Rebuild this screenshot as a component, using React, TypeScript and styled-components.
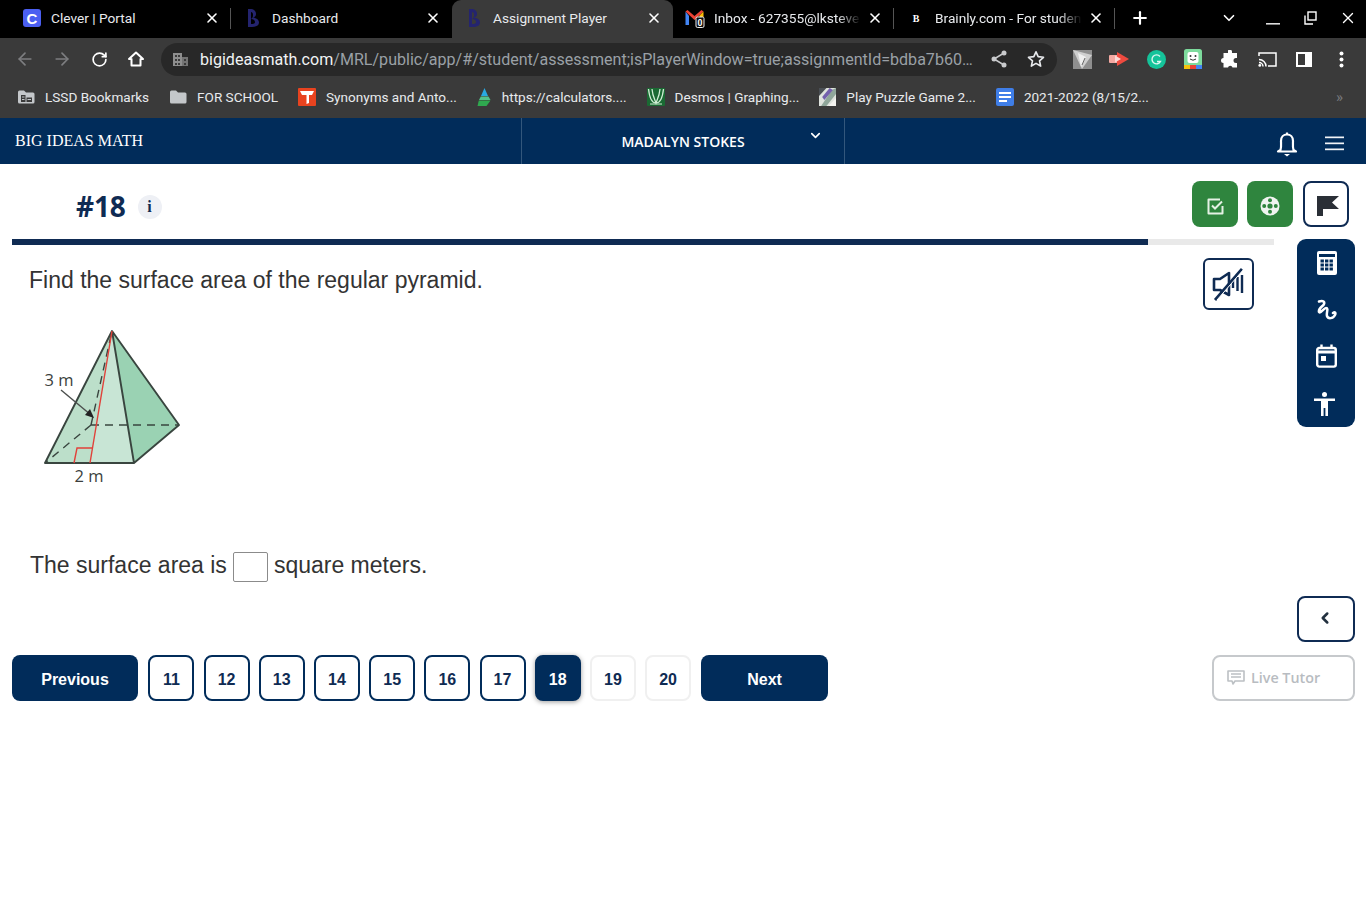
import React from "react";
import styled, { createGlobalStyle } from "styled-components";
import { X, Plus, ChevronDown, ArrowLeft, ArrowRight, RotateCw, ChevronLeft } from "lucide-react";

const NAVY = "#012c5a";
const INK = "#0f2b53";

const Global = createGlobalStyle`
  html, body { margin: 0; padding: 0; background: #fff; }
  #root { min-height: 912px; }
  * { box-sizing: border-box; }
`;

const Page = styled.div`
  width: 1366px;
  height: 912px;
  overflow: hidden;
  display: flex;
  flex-direction: column;
  font-family: "Liberation Sans", Arial, sans-serif;
`;

/* ---------- browser chrome ---------- */
const TabStrip = styled.div`
  height: 38px;
  background: #000;
  display: flex;
  align-items: stretch;
  padding-left: 10px;
  font-family: Roboto, sans-serif;
`;
const Tab = styled.div<{ $active?: boolean; $sep?: boolean }>`
  position: relative;
  width: 221px;
  flex: none;
  display: flex;
  align-items: center;
  padding: 0 9px 2px 0;
  color: #e8eaed;
  font-size: 13.7px;
  background: ${(p) => (p.$active ? "#3a3a3a" : "transparent")};
  border-radius: ${(p) => (p.$active ? "9px 9px 0 0" : "0")};
  &::after {
    content: "";
    display: ${(p) => (p.$sep ? "block" : "none")};
    position: absolute;
    right: 0;
    top: 8px;
    height: 21px;
    width: 1px;
    background: #555;
  }
`;
const TabIcon = styled.span`
  width: 41px;
  flex: none;
  display: flex;
  justify-content: center;
  padding-left: 3px;
`;
const TabTitle = styled.span`
  flex: 1;
  min-width: 0;
  white-space: nowrap;
`;
const FadedTitle = styled.span`
  flex: 1;
  min-width: 0;
  height: 18px;
  line-height: 18px;
  white-space: nowrap;
  overflow: hidden;
  -webkit-mask-image: linear-gradient(to right, #000 84%, transparent 100%);
  mask-image: linear-gradient(to right, #000 84%, transparent 100%);
`;
const CloseGlyph = styled.span`
  width: 20px;
  flex: none;
  display: flex;
  justify-content: center;
  color: #fff;
  margin-left: 4px;
`;
const StripTail = styled.div`
  display: flex;
  align-items: center;
  flex: 1;
  color: #fff;
  padding-bottom: 2px;
`;
const NewTab = styled.span`
  display: flex;
  margin-left: 15px;
`;
const TabSearch = styled.span`
  display: flex;
  margin-left: 70px;
`;
const WinButton = styled.span<{ $ml: number }>`
  display: flex;
  margin-left: ${(p) => p.$ml}px;
`;

const Toolbar = styled.div`
  height: 42px;
  background: #3a3a3a;
  display: flex;
  align-items: center;
  padding-left: 6.5px;
  font-family: Roboto, sans-serif;
`;
const ToolButton = styled.span<{ $dim?: boolean }>`
  width: 37px;
  flex: none;
  display: flex;
  justify-content: center;
  align-items: center;
  color: ${(p) => (p.$dim ? "#7d7e80" : "#fff")};
`;
const Omnibox = styled.div`
  width: 896px;
  height: 33px;
  flex: none;
  margin: 0 6.5px;
  background: #282828;
  border-radius: 17px;
  display: flex;
  align-items: center;
  padding: 0 3px 0 12px;
`;
const SiteGlyph = styled.span`
  display: flex;
  width: 27px;
  flex: none;
`;
const Url = styled.div`
  flex: 1;
  font-size: 16.07px;
  color: #9aa0a6;
  white-space: nowrap;
  overflow: hidden;
`;
const Host = styled.span`
  color: #f1f3f4;
`;

const BookmarkBar = styled.div`
  height: 38px;
  background: #3a3a3a;
  display: flex;
  align-items: center;
  padding: 0 0 4px 17px;
  gap: 20px;
  font-family: Roboto, sans-serif;
  font-size: 13.55px;
  color: #e8eaed;
`;
const Bookmark = styled.span`
  display: flex;
  align-items: center;
  gap: 10px;
  white-space: nowrap;
`;
const Overflow = styled.span`
  margin-left: auto;
  margin-right: 23px;
  color: #77797c;
  font-size: 15px;
`;

/* ---------- app header ---------- */
const AppHeader = styled.header`
  height: 46px;
  background: ${NAVY};
  display: flex;
  align-items: center;
  color: #fff;
`;
const Brand = styled.div`
  width: 521px;
  flex: none;
  padding-left: 15px;
  font-family: "Liberation Serif", serif;
  font-size: 16px;
`;
const UserMenu = styled.div`
  position: relative;
  width: 324px;
  height: 100%;
  flex: none;
  border-left: 1px solid #33577c;
  border-right: 1px solid #33577c;
  display: flex;
  align-items: center;
  justify-content: center;
  font-family: "Open Sans", sans-serif;
  font-weight: 600;
  font-size: 14px;
`;
const UserChevron = styled.span`
  position: absolute;
  right: 21px;
  top: 10px;
  display: flex;
`;
const HeaderActions = styled.div`
  flex: 1;
  display: flex;
  justify-content: flex-end;
  align-items: center;
  gap: 27px;
  padding-right: 22px;
  padding-top: 5px;
`;

/* ---------- question area ---------- */
const Main = styled.main`
  flex: 1;
  padding: 0 11px 0 12px;
  display: flex;
  flex-direction: column;
`;
const TitleRow = styled.div`
  height: 75px;
  display: flex;
  align-items: center;
  padding: 9px 6px 0 64px;
`;
const Title = styled.h1`
  margin: 0;
  font-family: "Open Sans", sans-serif;
  font-weight: 700;
  font-size: 28px;
  line-height: 1;
  color: ${INK};
  letter-spacing: -0.2px;
`;
const InfoDot = styled.span`
  width: 24px;
  height: 24px;
  margin-left: 12px;
  margin-top: 2px;
  border-radius: 50%;
  background: #eef0f5;
  display: flex;
  align-items: center;
  justify-content: center;
  font-family: "Liberation Serif", serif;
  font-weight: 700;
  font-size: 16px;
  color: ${INK};
`;
const TitleActions = styled.div`
  margin-left: auto;
  display: flex;
  gap: 9px;
  margin-top: -4px;
`;
const GreenAction = styled.button`
  width: 46px;
  height: 46px;
  border: 0;
  border-radius: 8px;
  background: #2f853e;
  padding: 4px 0 0;
  display: flex;
  align-items: center;
  justify-content: center;
`;
const FlagAction = styled.button`
  width: 46px;
  height: 46px;
  margin-left: 1px;
  border: 2px solid ${INK};
  border-radius: 8px;
  background: #fff;
  padding: 4px 0 0 3px;
  display: flex;
  align-items: center;
  justify-content: center;
`;

const Body = styled.div`
  height: 403px;
  display: grid;
  grid-template-columns: 1262px 58px;
  column-gap: 23px;
`;
const Question = styled.section`
  display: flex;
  flex-direction: column;
`;
const Progress = styled.div`
  height: 6px;
  background: #e9e9e9;
  flex: none;
`;
const ProgressFill = styled.div`
  height: 100%;
  background: ${INK};
`;
const PromptRow = styled.div`
  display: flex;
  justify-content: space-between;
  align-items: flex-start;
  padding: 13px 20px 0 17px;
`;
const Prompt = styled.p`
  margin: 8px 0 0;
  font-size: 23px;
  line-height: 28px;
  color: #333;
`;
const AudioButton = styled.button`
  width: 51px;
  height: 52px;
  border: 2px solid ${INK};
  border-radius: 6px;
  background: #fff;
  padding: 0;
  display: flex;
  align-items: center;
  justify-content: center;
`;
const Figure = styled.div`
  margin: 10px 0 0 8px;
  height: 170px;
`;
const Diagram = styled.svg`
  display: block;
`;
const AnswerLine = styled.div`
  margin: 61px 0 0 18px;
  display: flex;
  align-items: flex-start;
  font-size: 23px;
  line-height: 28px;
  color: #333;
`;
const AnswerBox = styled.span`
  width: 35px;
  height: 30px;
  margin: 1px 6px 0;
  border: 1px solid #8b8b8b;
  border-radius: 2px;
  background: #fff;
`;

const SideColumn = styled.aside`
  display: flex;
  flex-direction: column;
  justify-content: space-between;
`;
const Tools = styled.div`
  height: 188px;
  background: ${NAVY};
  border-radius: 9px;
  display: flex;
  flex-direction: column;
  align-items: center;
  padding: 12px 0 0 1px;
  gap: 23.5px;
`;
const CollapseButton = styled.button`
  height: 46px;
  border: 2px solid ${INK};
  border-radius: 8px;
  background: #fff;
  display: flex;
  align-items: center;
  justify-content: center;
  padding: 0 3px 2px 0;
  color: #22303f;
`;

const NavRow = styled.nav`
  margin-top: 13px;
  display: flex;
  align-items: center;
  gap: 10px;
`;
const PrimaryNav = styled.button<{ $w: number }>`
  width: ${(p) => p.$w}px;
  height: 46px;
  flex: none;
  border: 0;
  border-radius: 8px;
  background: ${NAVY};
  color: #fff;
  font: 700 16px "Liberation Sans", Arial, sans-serif;
  padding: 3px 0 0;
`;
const PageList = styled.div`
  display: flex;
  gap: 9.2px;
  padding-left: 0.4px;
`;
const PageButton = styled.button<{ $state: "done" | "current" | "todo" }>`
  width: 46px;
  height: 46px;
  flex: none;
  padding: 3px 0 0;
  border-radius: 8px;
  font: 700 16px "Liberation Sans", Arial, sans-serif;
  border: 2px solid ${(p) => (p.$state === "todo" ? "#f0f0f0" : NAVY)};
  background: ${(p) => (p.$state === "current" ? NAVY : "#fff")};
  color: ${(p) => (p.$state === "current" ? "#fff" : INK)};
  box-shadow: ${(p) => (p.$state === "current" ? "0 1px 5px rgba(0,0,0,.4)" : "none")};
`;
const LiveTutor = styled.button`
  margin-left: auto;
  width: 143px;
  height: 46px;
  border: 2px solid #c6c9cc;
  border-radius: 8px;
  background: #fff;
  color: #b8bcc1;
  display: flex;
  align-items: center;
  gap: 6px;
  font-family: "Open Sans", sans-serif;
  font-weight: 600;
  font-size: 14.3px;
  padding: 0 0 2px 13px;
`;

/* ---------- small drawings ---------- */
const CleverLogo = styled.span`
  width: 18px;
  height: 18px;
  border-radius: 3px;
  background: #4b5ff1;
  color: #fff;
  font: 700 15px "Liberation Sans", sans-serif;
  display: flex;
  align-items: center;
  justify-content: center;
`;
const BrainlyLogo = styled.span`
  color: #fff;
  font: 700 10px "Liberation Serif", serif;
`;
const BimLogo = () => (
  <svg width="16" height="20" viewBox="0 0 16 20">
    <path d="M3 1 L5 1 C9 1 11 3 11 6 C11 8 10 9 8 9.5 C12 10 14 12 14 14.5 C14 17.5 11 19 7 19 L3 19 Z M6 4 L6 16 C9 16 10 15.5 10 14 C10 12 8 11 6 11 C8 10 8 8 8 6.5 C8 5 7 4 6 4 Z" fill="#24246f" fillRule="evenodd" />
  </svg>
);
const GmailLogo = () => (
  <svg width="20" height="20" viewBox="0 0 20 20">
    <path d="M0.5 3.5 L0.5 17 L4 17 L4 8 Z" fill="#4285f4" />
    <path d="M0.5 3.5 L2.5 2 L9.5 8 L16.5 2 L18.5 3.5 L9.5 12 Z" fill="#ea4335" />
    <path d="M14.5 7.5 L18.5 3.5 L18.5 9 L14.5 9 Z" fill="#fbbc04" />
    <rect x="11" y="9" width="8" height="10.5" rx="1.5" fill="#111" stroke="#eee" strokeWidth="1" />
    <text x="15" y="17.5" textAnchor="middle" fontSize="8.5" fontFamily="Roboto" fontWeight="700" fill="#fff">0</text>
  </svg>
);
const SiteInfo = () => (
  <svg width="15" height="15" viewBox="0 0 15 15" fill="#8e8e8e">
    <rect x="0" y="1" width="9" height="13" />
    <rect x="9" y="5" width="6" height="9" opacity=".75" />
    <g fill="#3a3a3a">
      <rect x="2" y="3" width="2" height="2" /><rect x="5" y="3" width="2" height="2" />
      <rect x="2" y="7" width="2" height="2" /><rect x="5" y="7" width="2" height="2" />
      <rect x="2" y="11" width="2" height="2" /><rect x="5" y="11" width="2" height="2" />
      <rect x="11" y="7" width="2" height="2" /><rect x="11" y="11" width="2" height="2" />
    </g>
  </svg>
);
const HomeIcon = () => (
  <svg width="18" height="18" viewBox="0 0 18 18" fill="none" stroke="#fff" strokeWidth="2">
    <path d="M9 2.5 L16 9 H13.5 V15.5 H4.5 V9 H2 Z" strokeLinejoin="round" />
  </svg>
);
const ShareIcon = () => (
  <svg width="16" height="18" viewBox="0 0 16 18" fill="#c9cacc">
    <circle cx="13" cy="3" r="2.5" /><circle cx="13" cy="15" r="2.5" /><circle cx="3" cy="9" r="2.5" />
    <path d="M13 3 L3 9 L13 15" fill="none" stroke="#c9cacc" strokeWidth="1.5" />
  </svg>
);
const StarIcon = () => (
  <svg width="18" height="18" viewBox="0 0 24 24" fill="none" stroke="#e8eaed" strokeWidth="2.2" strokeLinejoin="round">
    <path d="M12 2.5 L14.9 8.9 L22 9.7 L16.7 14.4 L18.2 21.4 L12 17.8 L5.8 21.4 L7.3 14.4 L2 9.7 L9.1 8.9 Z" />
  </svg>
);
const Folder = ({ managed }: { managed?: boolean }) => (
  <svg width="18" height="16" viewBox="0 0 18 16">
    <path d="M1 3 a1.5 1.5 0 0 1 1.5 -1.5 H7 L9 3.5 H16 a1.5 1.5 0 0 1 1.5 1.5 V13 a1.5 1.5 0 0 1 -1.5 1.5 H2.5 A1.5 1.5 0 0 1 1 13 Z" fill="#c4c7ca" />
    {managed && <path d="M4 6 H8.5 V13 H4 Z M9.5 8.5 H15 V13 H9.5 Z" fill="#3a3a3a" />}
    {managed && <path d="M5 7.5 H7.5 V8.5 H5 Z M5 10 H7.5 V11 H5 Z M10.5 10 H14 V11 H10.5 Z" fill="#c4c7ca" />}
  </svg>
);
const SynLogo = () => (
  <svg width="18" height="18" viewBox="0 0 18 18">
    <rect width="18" height="18" rx="1" fill="#e8431f" />
    <path d="M2 3 H16 L14 7 H11 V15 L8.5 16 V7 H4 Z" fill="#fff" />
  </svg>
);
const CalcLogo = () => (
  <svg width="15" height="18" viewBox="0 0 15 18">
    <path d="M7.5 0 L11 8 L4 8 Z" fill="#29a9e1" />
    <path d="M3.8 8.5 L11.5 8.5 L13.5 12 L2 12 Z" fill="#53c28b" />
    <path d="M1.8 12.5 L13.5 12.5 L9.5 18 L0.5 18 Z" fill="#2fa84f" />
  </svg>
);
const DesmosLogo = () => (
  <svg width="18" height="18" viewBox="0 0 18 18" fill="none">
    <rect width="18" height="18" rx="1" fill="#1a6a33" />
    <path d="M1.5 1 C2.5 10 5 15 9 15 C13 15 15.5 10 16.5 1 M5 1 C5.5 8 8 12 9 15 C10 12 12.5 8 13 1" stroke="#cfeed4" strokeWidth="1.3" />
    <path d="M3 16 H15" stroke="#cfeed4" strokeWidth="1" />
  </svg>
);
const PuzzleLogo = () => (
  <svg width="17" height="18" viewBox="0 0 16 18" preserveAspectRatio="none">
    <rect width="16" height="18" fill="#dfe3dd" />
    <path d="M2 18 L12 2 L16 0 L16 6 L7 18 Z" fill="#8fa69a" />
    <path d="M3 9 L10 0 L13 2 L5 12 Z" fill="#7460ad" />
    <path d="M0 0 H7 L0 8 Z" fill="#4a4f55" />
    <path d="M9 18 L16 10 L16 18 Z" fill="#f3f3ef" />
  </svg>
);
const DocsLogo = () => (
  <svg width="18" height="18" viewBox="0 0 18 18">
    <rect width="18" height="18" rx="2" fill="#3f7ee8" />
    <rect x="3" y="4" width="12" height="2" fill="#fff" />
    <rect x="3" y="8" width="12" height="2" fill="#fff" />
    <rect x="3" y="12" width="8" height="2" fill="#fff" />
  </svg>
);
const ExtArrow = () => (
  <svg width="19" height="19" viewBox="0 0 19 19">
    <rect width="19" height="19" fill="#8f8f8f" />
    <path d="M0 0 L19 5 L9 19 Z" fill="#cfcfcf" />
    <path d="M8 17 L13 7 L5 3 Z" fill="#efefef" />
    <path d="M9 15 L12 8" stroke="#666" strokeWidth="1" />
  </svg>
);
const ExtRed = () => (
  <svg width="20" height="16" viewBox="0 0 20 16">
    <rect x="0" y="4" width="10" height="8" rx="1" fill="#f4a9a2" />
    <path d="M8 1 L20 8 L8 15 Z" fill="#ee4a3f" />
    <path d="M6 4.5 L12 8 L6 11.5 Z" fill="#fbd9d6" />
  </svg>
);
const ExtGrammarly = () => (
  <svg width="19" height="19" viewBox="0 0 19 19" fill="none">
    <circle cx="9.5" cy="9.5" r="9.5" fill="#15c39a" />
    <path d="M13 6.5 A4.5 4.5 0 1 0 13.5 11.5 H10" stroke="#fff" strokeWidth="1.4" opacity=".85" />
  </svg>
);
const ExtFace = () => (
  <svg width="18" height="20" viewBox="0 0 18 20">
    <rect width="18" height="18" rx="2.5" fill="#7ddb9d" />
    <rect x="0" y="16" width="6" height="4" fill="#f4c20d" />
    <rect x="6" y="16" width="6" height="4" fill="#ea4335" />
    <rect x="12" y="16" width="6" height="4" fill="#4285f4" />
    <rect x="3.5" y="3" width="11" height="11" rx="2" fill="#fff" />
    <circle cx="6.5" cy="7" r="1" fill="#333" /><circle cx="11.5" cy="7" r="1" fill="#333" />
    <path d="M6 10 Q9 12.5 12 10" stroke="#333" fill="none" />
  </svg>
);
const ExtensionIcon = () => (
  <svg width="18" height="18" viewBox="0 0 18 18" fill="#fff">
    <path d="M7 0.5 A2.2 2.2 0 0 1 11 2 V3 H16 V8 H15 A2.2 2.2 0 0 0 15 13 H16 V17.5 H11.5 A2.3 2.3 0 0 0 7 17.5 H2.5 V13 A2.3 2.3 0 0 1 2.5 8 V3 H7 Z" />
  </svg>
);
const CastIcon = () => (
  <svg width="19" height="15" viewBox="0 0 19 15" fill="none" stroke="#fff" strokeWidth="1.5">
    <path d="M1 4 V1 H18 V14 H10" />
    <path d="M1 7.5 A7 7 0 0 1 8 14.5 M1 10.5 A4 4 0 0 1 5 14.5" />
    <circle cx="1.8" cy="13.4" r="1.4" fill="#fff" stroke="none" />
  </svg>
);
const SidePanelIcon = () => (
  <svg width="16" height="15" viewBox="0 0 16 15">
    <rect x="1" y="1" width="14" height="13" fill="none" stroke="#fff" strokeWidth="2" />
    <rect x="9" y="1" width="6" height="13" fill="#fff" />
  </svg>
);
const DotsIcon = () => (
  <svg width="5" height="17" viewBox="0 0 5 17" fill="#fff">
    <circle cx="2.5" cy="2.5" r="2" /><circle cx="2.5" cy="8.5" r="2" /><circle cx="2.5" cy="14.5" r="2" />
  </svg>
);
const MinimizeIcon = () => (
  <svg width="14" height="14" viewBox="0 0 14 14"><rect y="12" width="14" height="1.6" fill="#ddd" /></svg>
);
const RestoreIcon = () => (
  <svg width="13" height="14" viewBox="0 0 13 14" fill="none" stroke="#fff" strokeWidth="1.4">
    <rect x="4" y="1" width="8" height="8" />
    <path d="M1 4.5 V13 H9" />
  </svg>
);
const BellIcon = () => (
  <svg width="22" height="26" viewBox="0 0 22 26" fill="none" stroke="#fff" strokeWidth="2.2" strokeLinejoin="round">
    <path d="M11 1.5 V3.5" />
    <path d="M4.5 19 C5.5 16 5 12 5 10 C5 6 7.5 3.5 11 3.5 C14.5 3.5 17 6 17 10 C17 12 16.5 16 17.5 19 L20 20.5 H2 Z" />
    <path d="M8 23 H14 L11 25.5 Z" fill="#fff" stroke="none" />
  </svg>
);
const MenuIcon = () => (
  <svg width="19" height="15" viewBox="0 0 19 15" fill="#f2f4f7">
    <rect y="0.5" width="19" height="1.7" /><rect y="6.5" width="19" height="1.7" /><rect y="12.5" width="19" height="1.7" />
  </svg>
);

const CheckIcon = () => (
  <svg width="17" height="17" viewBox="0 0 17 17" fill="none" stroke="#e4f1e4" strokeWidth="2">
    <path d="M15.5 8 V15.5 H1.5 V1.5 H13" strokeLinejoin="round" />
    <path d="M5 7.5 L8 10.5 L15 3.5" />
  </svg>
);
const LifeRing = () => (
  <svg width="20" height="20" viewBox="0 0 20 20">
    <circle cx="10" cy="10" r="9.5" fill="#f0f4f0" />
    <circle cx="10" cy="4.2" r="2" fill="#2f853e" /><circle cx="10" cy="15.8" r="2" fill="#2f853e" />
    <circle cx="4.2" cy="10" r="2" fill="#2f853e" /><circle cx="15.8" cy="10" r="2" fill="#2f853e" />
    <circle cx="10" cy="10" r="2.6" fill="#2f853e" />
  </svg>
);
const FlagIcon = () => (
  <svg width="22" height="20" viewBox="0 0 22 20"><path d="M0 0 H22 L15 6.5 L22 13 H6 V20 H0 Z" fill="#2a2f36" /></svg>
);
const MuteIcon = () => (
  <svg width="34" height="34" viewBox="0 0 34 34" fill="none" stroke={INK} strokeWidth="2.6">
    <path d="M2 12 H8 L17 6 V28 L8 23 H2 Z" strokeLinejoin="round" />
    <path d="M21 13 V21 M25.5 10 V24 M30 8 V26" strokeWidth="2.4" />
    <path d="M3 33 L30 2" strokeWidth="2.8" />
    <path d="M5 33 L32 2" stroke="#fff" strokeWidth="1" />
  </svg>
);
const CalcIcon = () => (
  <svg width="20" height="24" viewBox="0 0 20 24">
    <rect width="20" height="24" rx="2" fill="#fff" />
    <rect x="2" y="3" width="16" height="3" fill={NAVY} />
    <g fill={NAVY}>
      {[8.5, 12.5, 16.5].map((y) => [3.5, 8, 12.5].map((x) => <rect key={`${x}-${y}`} x={x} y={y} width="3.4" height="3" />))}
    </g>
  </svg>
);
const SquiggleIcon = () => (
  <svg width="22" height="22" viewBox="0 0 22 22" fill="none" stroke="#fff" strokeWidth="2.5" strokeLinecap="round" strokeLinejoin="round">
    <path d="M3 2.5 C7 1 9.5 3 7.5 6 C5.5 8 2 10 3 13 C4 15 8 9 10 9 C13 9 10 14 11 17 C12 20 17 20 19 16 C20 14 19 12.5 17 14" />
  </svg>
);
const CalendarIcon = () => (
  <svg width="21" height="24" viewBox="0 0 21 24" fill="none" stroke="#fff" strokeWidth="2.4">
    <rect x="1.2" y="4" width="18.6" height="18.6" rx="2" />
    <path d="M1 8 H20" strokeWidth="3" />
    <path d="M5.5 0.5 V4 M15.5 0.5 V4" />
    <rect x="5" y="12" width="5" height="5" fill="#fff" stroke="none" />
  </svg>
);
const PersonIcon = () => (
  <svg width="21" height="25" viewBox="0 0 21 25" fill="#fff" style={{ marginRight: 4 }}>
    <circle cx="10.5" cy="2.5" r="2.5" />
    <path d="M0 6.5 H21 V9 H14 V24 H11.4 V16 H9.6 V24 H7 V9 H0 Z" />
  </svg>
);
const TutorIcon = () => (
  <svg width="18" height="16" viewBox="0 0 18 16" fill="none" stroke="#bcc0c4" strokeWidth="1.6">
    <path d="M1 2 H17 V12 H8 L6 15 L5 12 H1 Z" strokeLinejoin="round" />
    <path d="M4 5 H14 M4 8 H14" />
  </svg>
);

const SvgLabel = styled.text`
  font-family: "Open Sans", sans-serif;
  font-weight: 500;
  font-size: 16.5px;
  fill: #3b3f3d;
`;

/* viewBox uses page coordinates of the reference crop */
const Pyramid = () => (
  <Diagram width="180" height="170" viewBox="20 320 180 170">
    <path d="M45 463 L112 331 L134 463 Z" fill="#c8e5d5" />
    <path d="M45 463 L112 331 L90 463 Z" fill="#bcdfca" />
    <path d="M134 463 L112 331 L179 425 Z" fill="#9ad2b3" />
    <g fill="none" stroke="#39453f" strokeWidth="1.9">
      <path d="M45 463 L112 331 L179 425 L134 463 Z M112 331 L134 463" strokeLinejoin="round" />
      <path d="M91 425 L179 425 M91 425 L45 463 M91 425 L112 331" strokeDasharray="8 6" strokeWidth="1.4" />
    </g>
    <g fill="none" stroke="#e1413a" strokeWidth="1.4">
      <path d="M112 331 L90 463" />
      <path d="M74 463 L77 448 L92 448" />
    </g>
    <path d="M61 390 L91 415" stroke="#4b4f4d" strokeWidth="1.4" />
    <path d="M94 418 L85 415 L90 409 Z" fill="#222" />
    <SvgLabel x="44.5" y="386">3 m</SvgLabel>
    <SvgLabel x="74.5" y="482">2 m</SvgLabel>
  </Diagram>
);

const pages: { n: number; state: "done" | "current" | "todo" }[] = [
  { n: 11, state: "done" }, { n: 12, state: "done" }, { n: 13, state: "done" }, { n: 14, state: "done" },
  { n: 15, state: "done" }, { n: 16, state: "done" }, { n: 17, state: "done" }, { n: 18, state: "current" },
  { n: 19, state: "todo" }, { n: 20, state: "todo" },
];

const Close = () => (
  <CloseGlyph><X size={16} strokeWidth={2.4} /></CloseGlyph>
);

export default function App() {
  return (
    <Page>
      <Global />
      <TabStrip>
        <Tab $sep><TabIcon><CleverLogo>C</CleverLogo></TabIcon><TabTitle>Clever | Portal</TabTitle><Close /></Tab>
        <Tab><TabIcon><BimLogo /></TabIcon><TabTitle>Dashboard</TabTitle><Close /></Tab>
        <Tab $active><TabIcon><BimLogo /></TabIcon><TabTitle>Assignment Player</TabTitle><Close /></Tab>
        <Tab $sep><TabIcon><GmailLogo /></TabIcon><FadedTitle>Inbox - 627355@lksteve</FadedTitle><Close /></Tab>
        <Tab $sep><TabIcon><BrainlyLogo>B</BrainlyLogo></TabIcon><FadedTitle>Brainly.com - For studen</FadedTitle><Close /></Tab>
        <StripTail>
          <NewTab><Plus size={20} strokeWidth={2.6} /></NewTab>
          <TabSearch><ChevronDown size={18} strokeWidth={2.2} /></TabSearch>
          <WinButton $ml={28}><MinimizeIcon /></WinButton>
          <WinButton $ml={24}><RestoreIcon /></WinButton>
          <WinButton $ml={22}><X size={18} strokeWidth={1.8} /></WinButton>
        </StripTail>
      </TabStrip>
      <Toolbar>
        <ToolButton $dim><ArrowLeft size={20} /></ToolButton>
        <ToolButton $dim><ArrowRight size={20} /></ToolButton>
        <ToolButton><RotateCw size={17} strokeWidth={2.4} /></ToolButton>
        <ToolButton><HomeIcon /></ToolButton>
        <Omnibox>
          <SiteGlyph><SiteInfo /></SiteGlyph>
          <Url><Host>bigideasmath.com</Host>/MRL/public/app/#/student/assessment;isPlayerWindow=true;assignmentId=bdba7b60…</Url>
          <ToolButton><ShareIcon /></ToolButton>
          <ToolButton><StarIcon /></ToolButton>
        </Omnibox>
        <ToolButton><ExtArrow /></ToolButton>
        <ToolButton><ExtRed /></ToolButton>
        <ToolButton><ExtGrammarly /></ToolButton>
        <ToolButton><ExtFace /></ToolButton>
        <ToolButton><ExtensionIcon /></ToolButton>
        <ToolButton><CastIcon /></ToolButton>
        <ToolButton><SidePanelIcon /></ToolButton>
        <ToolButton><DotsIcon /></ToolButton>
      </Toolbar>
      <BookmarkBar>
        <Bookmark><Folder managed />LSSD Bookmarks</Bookmark>
        <Bookmark><Folder />FOR SCHOOL</Bookmark>
        <Bookmark><SynLogo />Synonyms and Anto...</Bookmark>
        <Bookmark><CalcLogo />https://calculators....</Bookmark>
        <Bookmark><DesmosLogo />Desmos | Graphing...</Bookmark>
        <Bookmark><PuzzleLogo />Play Puzzle Game 2...</Bookmark>
        <Bookmark><DocsLogo />2021-2022 (8/15/2...</Bookmark>
        <Overflow>»</Overflow>
      </BookmarkBar>
      <AppHeader>
        <Brand>BIG IDEAS MATH</Brand>
        <UserMenu>
          MADALYN STOKES
          <UserChevron><ChevronDown size={15} strokeWidth={2.6} /></UserChevron>
        </UserMenu>
        <HeaderActions>
          <BellIcon />
          <MenuIcon />
        </HeaderActions>
      </AppHeader>
      <Main>
        <TitleRow>
          <Title>#18</Title>
          <InfoDot>i</InfoDot>
          <TitleActions>
            <GreenAction><CheckIcon /></GreenAction>
            <GreenAction><LifeRing /></GreenAction>
            <FlagAction><FlagIcon /></FlagAction>
          </TitleActions>
        </TitleRow>
        <Body>
          <Question>
            <Progress><ProgressFill style={{ width: "90%" }} /></Progress>
            <PromptRow>
              <Prompt>Find the surface area of the regular pyramid.</Prompt>
              <AudioButton><MuteIcon /></AudioButton>
            </PromptRow>
            <Figure><Pyramid /></Figure>
            <AnswerLine>The surface area is<AnswerBox />square meters.</AnswerLine>
          </Question>
          <SideColumn>
            <Tools>
              <CalcIcon />
              <SquiggleIcon />
              <CalendarIcon />
              <PersonIcon />
            </Tools>
            <CollapseButton><ChevronLeft size={18} strokeWidth={3.4} /></CollapseButton>
          </SideColumn>
        </Body>
        <NavRow>
          <PrimaryNav $w={126}>Previous</PrimaryNav>
          <PageList>
            {pages.map((p) => <PageButton key={p.n} $state={p.state}>{p.n}</PageButton>)}
          </PageList>
          <PrimaryNav $w={127}>Next</PrimaryNav>
          <LiveTutor><TutorIcon />Live Tutor</LiveTutor>
        </NavRow>
      </Main>
    </Page>
  );
}
